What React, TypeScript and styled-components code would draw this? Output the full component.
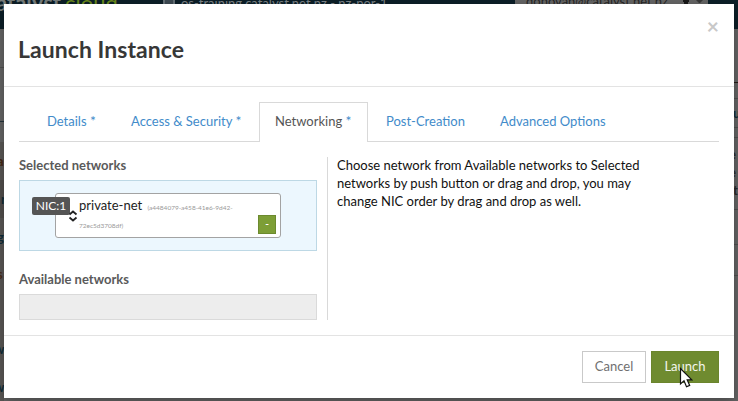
import React from "react";
import styled, { createGlobalStyle } from "styled-components";

const GlobalStyle = createGlobalStyle`
  * { box-sizing: border-box; }
  html, body { margin: 0; padding: 0; }
  body {
    width: 738px;
    height: 401px;
    overflow: hidden;
    font-family: Lato, "Liberation Sans", sans-serif;
    font-size: 13px;
    line-height: 18px;
    color: #1c1c1c;
    background: #656565;
  }
`;

const Screen = styled.div`
  position: relative;
  width: 738px;
  height: 401px;
  padding: 4px;
  overflow: hidden;
`;

const Backdrop = styled.div`
  position: absolute;
  inset: 0;
  overflow: hidden;
  background: #656565;
`;

const TopBar = styled.div`
  display: flex;
  align-items: flex-start;
  height: 29px;
  background: #0c1f28;
  color: #7d8387;
  white-space: nowrap;
`;

const Brand = styled.div`
  width: 163px;
  height: 29px;
  text-indent: -4px;
  font-size: 22px;
  line-height: 6px;
  font-weight: 700;
  color: #777d7c;
`;

const BrandAccent = styled.span`
  margin-left: 4px;
  font-weight: 400;
  color: #6b8a1c;
`;

const Project = styled.div`
  display: flex;
  gap: 6px;
  width: 352px;
  line-height: 7px;
`;

const Account = styled.div`
  display: flex;
  gap: 14px;
  width: 193px;
  height: 9px;
  padding-left: 11px;
  background: #656565;
  color: #252525;
  font-size: 13px;
  line-height: 3px;
`;

const PageArea = styled.div`
  display: flex;
  justify-content: space-between;
`;

const Gutter = styled.div`
  width: 4px;
`;

const GutterRow = styled.div<{ $h: number; $line?: string; $bg?: string; $color?: string; $indent?: number }>`
  height: ${(p) => p.$h}px;
  line-height: ${(p) => p.$h}px;
  overflow: hidden;
  border-bottom: ${(p) => (p.$line ? `1px solid ${p.$line}` : "0")};
  background: ${(p) => p.$bg ?? "transparent"};
  color: ${(p) => p.$color ?? "#102c38"};
  text-indent: ${(p) => p.$indent ?? 0}px;
  font-weight: 700;
  white-space: nowrap;
`;

const Modal = styled.section`
  position: relative;
  display: flex;
  flex-direction: column;
  width: 730px;
  height: 394px;
  background: #fff;
  box-shadow: 0 4px 12px rgba(0, 0, 0, 0.3);
`;

const Header = styled.header`
  display: flex;
  justify-content: space-between;
  height: 83px;
  padding: 0 15px;
  border-bottom: 1px solid #e3e3e3;
`;

const Title = styled.h3`
  margin: 31px 0 0 -1px;
  font-size: 23px;
  line-height: 28px;
  font-weight: 700;
  letter-spacing: 0.05px;
  color: #373737;
`;

const Close = styled.button`
  align-self: flex-start;
  margin: 12px 0 0;
  padding: 0;
  border: 0;
  background: none;
  font-family: inherit;
  font-size: 21px;
  line-height: 20px;
  font-weight: 700;
  color: #c8c8c8;
`;

const Body = styled.div`
  flex: 1;
  padding: 15px 15px 0;
`;

const Tabs = styled.nav`
  display: flex;
  gap: 2px;
  height: 40px;
  padding-left: 12px;
  border-bottom: 1px solid #d9d9d9;
`;

const Tab = styled.a<{ $active?: boolean }>`
  height: 40px;
  padding: 9px 0 9px 15px;
  border: 1px solid ${(p) => (p.$active ? "#d9d9d9" : "transparent")};
  border-bottom: 0;
  background: ${(p) => (p.$active ? "#fff" : "transparent")};
  color: ${(p) => (p.$active ? "#555" : "#428bca")};
  white-space: nowrap;

  &:nth-child(1) { width: 82px; }
  &:nth-child(2) { width: 142px; }
  &:nth-child(3) { width: 109px; }
  &:nth-child(4) { width: 112px; }
`;

const Required = styled.span`
  font-size: 14px;
  line-height: 1;
  color: #428bca;
`;

const Columns = styled.div`
  display: grid;
  grid-template-columns: 309px 1fr;
  height: 163px;
  margin-top: 15px;
`;

const NetworkColumn = styled.div`
  padding-right: 10px;
  border-right: 1px solid #d9d9d9;
`;

const Label = styled.h4`
  margin: 0;
  padding-bottom: 1px;
  font-size: 13px;
  line-height: 17px;
  font-weight: 700;
  color: #5a5a5a;
`;

const SelectedList = styled.div`
  height: 71px;
  margin: 5px 0 20px;
  padding: 12px 35px;
  border: 1px solid #bdd8e5;
  background: #ecf7fe;
`;

const NetworkItem = styled.div`
  position: relative;
  width: 226px;
  height: 45px;
  padding: 2px 42px 0 23px;
  border: 1px solid #a3a3a3;
  border-radius: 3px;
  background: #fff;
  color: #222;
  line-height: 18px;
`;

const NetworkId = styled.small`
  margin-left: 2px;
  font-size: 6.5px;
  line-height: 1;
  color: #999;
`;

const NicBadge = styled.span`
  position: absolute;
  left: -24px;
  top: 3px;
  width: 38px;
  height: 18px;
  border-radius: 2px;
  background: #555;
  color: #fff;
  font-size: 12px;
  text-align: center;
  line-height: 17px;
`;

const SortHandle = styled.svg`
  position: absolute;
  left: 12px;
  top: 16px;
`;

const RemoveButton = styled.button`
  position: absolute;
  right: 4px;
  bottom: 3px;
  width: 18px;
  height: 19px;
  padding: 0 0 2px;
  border: 1px solid #6c8a2e;
  background: #7d9e36;
  color: #fff;
  font: 700 10px/15px Lato, sans-serif;
`;

const AvailableList = styled.div`
  height: 26px;
  margin-top: 5px;
  border: 1px solid #dadada;
  background: #ededed;
`;

const HelpText = styled.p`
  width: 320px;
  margin: -1px 0 0;
  padding-left: 9px;
  color: #111;
`;

const Footer = styled.footer`
  display: flex;
  justify-content: flex-end;
  gap: 5px;
  height: 63px;
  padding: 15px;
  border-top: 1px solid #e3e3e3;
`;

const Button = styled.button<{ $primary?: boolean }>`
  width: ${(p) => (p.$primary ? 68 : 64)}px;
  height: 32px;
  padding: 0 0 2px;
  border: 1px solid ${(p) => (p.$primary ? "#6b852d" : "#c9c9c9")};
  background: ${(p) => (p.$primary ? "#6f8b30" : "#fff")};
  color: ${(p) => (p.$primary ? "#f4f6ee" : "#707070")};
  font-family: inherit;
  font-size: 13px;
  line-height: 18px;
`;

const Pointer = styled.svg`
  position: absolute;
  left: 679px;
  top: 367px;
`;

const PageBehind = () => (
  <Backdrop aria-hidden>
    <TopBar>
      <Brand>atalyst<BrandAccent>cloud</BrandAccent></Brand>
      <Project>
        <svg width="12" height="5">
          <path d="M0 0h12v5H0z" fill="#657077" />
          <path d="M2 1h8M2 3h8" stroke="#192730" />
        </svg>
        os-training.catalyst.net.nz - nz-por-1
      </Project>
      <Account>
        donovan@catalyst.net.nz
        <svg width="24" height="5">
          <path d="M1 0h6v2h-1v2H2V2H1z" fill="#171717" />
          <path d="M14 0h7l-3 3h-1z" fill="#393939" />
        </svg>
      </Account>
    </TopBar>
    <PageArea>
      <Gutter>
        <GutterRow $h={39} $line="#505050" />
        <GutterRow $h={54} $line="#24343c" />
        <GutterRow $h={20} />
        <GutterRow $h={38} $bg="#5a5856" $indent={-3} $color="#442611">ar</GutterRow>
        <GutterRow $h={38} $bg="#524f4d" $indent={1}>r</GutterRow>
        <GutterRow $h={38} $bg="#5a5856" $indent={-3}>g</GutterRow>
        <GutterRow $h={37} $bg="#5a5856" $indent={-3} $color="#4b2d1a">s</GutterRow>
        <GutterRow $h={37} $bg="#5a5856" />
        <GutterRow $h={38} $bg="#5a5856" $indent={-6}>w</GutterRow>
        <GutterRow $h={38} $bg="#5a5856" $indent={-6}>w</GutterRow>
      </Gutter>
      <Gutter>
        <GutterRow $h={54} $line="#261b16" />
        <GutterRow $h={16} $line="#505050" />
        <GutterRow $h={29} $line="#505050" $indent={-1}>u</GutterRow>
        <GutterRow $h={10} $line="#505050" />
        <GutterRow $h={7} />
        <GutterRow $h={18} $indent={-5} $color="#292929">e</GutterRow>
        <GutterRow $h={18} $indent={-5} $color="#292929">e</GutterRow>
        <GutterRow $h={18} $indent={-1} $color="#292929">t</GutterRow>
        <GutterRow $h={11} $line="#505050" />
        <GutterRow $h={35} $line="#505050" />
        <GutterRow $h={31} $line="#505050" />
      </Gutter>
    </PageArea>
  </Backdrop>
);

export default function App() {
  return (
    <Screen>
      <GlobalStyle />
      <PageBehind />
      <Modal role="dialog" aria-label="Launch Instance">
        <Header>
          <Title>Launch Instance</Title>
          <Close aria-label="Close">×</Close>
        </Header>
        <Body>
          <Tabs>
            <Tab>Details <Required>*</Required></Tab>
            <Tab>Access &amp; Security <Required>*</Required></Tab>
            <Tab $active>Networking <Required>*</Required></Tab>
            <Tab>Post-Creation</Tab>
            <Tab>Advanced Options</Tab>
          </Tabs>
          <Columns>
            <NetworkColumn>
              <Label>Selected networks</Label>
              <SelectedList>
                <NetworkItem>
                  <NicBadge>NIC:1</NicBadge>
                  <SortHandle width="10" height="12" viewBox="0 0 10 12" fill="none" stroke="#222" strokeWidth="1.8">
                    <path d="M1.5 4.5 5 1.5l3.5 3M1.5 7.5l3.5 3 3.5-3" />
                  </SortHandle>
                  private-net <NetworkId>(a4484079-a458-41e6-9d42-72ec5d3708df)</NetworkId>
                  <RemoveButton>-</RemoveButton>
                </NetworkItem>
              </SelectedList>
              <Label>Available networks</Label>
              <AvailableList />
            </NetworkColumn>
            <HelpText>
              Choose network from Available networks to Selected networks by push button or drag and drop, you may change NIC order by drag and drop as well.
            </HelpText>
          </Columns>
        </Body>
        <Footer>
          <Button>Cancel</Button>
          <Button $primary>Launch</Button>
        </Footer>
      </Modal>
      <Pointer width="14" height="22" viewBox="0 0 14 22">
        <path d="M1.5 1.5v15.5l3.5-3.2 2.5 6 3.2-1.4-2.5-5.6h4.6z" fill="#fff" stroke="#111" strokeWidth="1.2" />
      </Pointer>
    </Screen>
  );
}
